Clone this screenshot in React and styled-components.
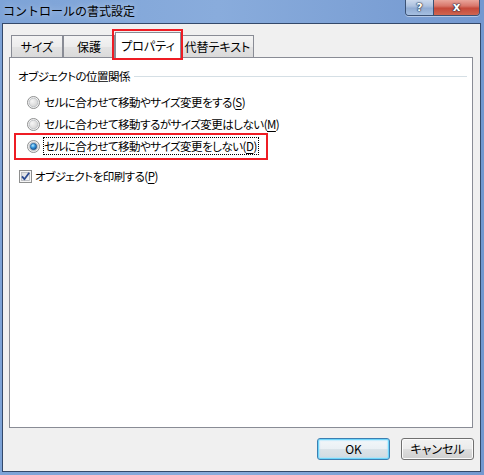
import React from 'react';
import styled, { createGlobalStyle, css } from 'styled-components';

const GlobalStyle = createGlobalStyle`
  html, body { margin: 0; padding: 0; }
  body {
    font-family: "Noto Sans CJK JP", "Noto Sans", sans-serif;
    background: #ffffff;
  }
`;

const Window = styled.div`
  box-sizing: border-box;
  width: 484px;
  height: 475px;
  padding: 0 3px 3px 2px;
  display: flex;
  flex-direction: column;
  overflow: hidden;
  background: linear-gradient(to right, #7da3d7 0%, #89acdc 45%, #7398d0 100%);
`;

const TitleBar = styled.div`
  flex: none;
  height: 23px;
  display: flex;
  align-items: flex-start;
  justify-content: space-between;
`;

const Title = styled.div`
  padding: 3px 0 0 1px;
  font-size: 12px;
  line-height: 16px;
  color: #000;
  text-shadow: 0 0 6px rgba(255, 255, 255, 0.6);
`;

const CaptionButtons = styled.div`
  display: flex;
  height: 16px;
  margin-right: 1px;
  box-sizing: border-box;
  border: 1px solid #3b5275;
  border-top: none;
  border-radius: 0 0 4px 4px;
  overflow: hidden;
  box-shadow: 0 1px 0 rgba(255, 255, 255, 0.45);
`;

const CaptionButton = styled.div`
  box-sizing: border-box;
  width: ${(p) => p.$w}px;
  display: flex;
  align-items: center;
  justify-content: center;
  font-family: "DejaVu Sans", sans-serif;
  font-weight: bold;
  font-size: ${(p) => (p.$close ? 12 : 11)}px;
  line-height: 1;
  color: #fff;
  padding-bottom: 1px;
  text-shadow: 0 0 1px #1c2a40, 0 0 1px #1c2a40, 0 0 2px #1c2a40;
  background: ${(p) =>
    p.$close
      ? 'linear-gradient(#e9a59b 0%, #d8766a 40%, #c5493a 55%, #cf6550 100%)'
      : 'linear-gradient(#cbd9ed 0%, #aec2df 40%, #91acd3 55%, #a5bfe1 100%)'};
  & + & {
    border-left: 1px solid #3b5275;
  }
`;

const Client = styled.div`
  flex: 1;
  box-sizing: border-box;
  border: 1px solid #34496a;
  background: #f0f0f0;
  padding: 8px 7px 11px 6px;
  display: flex;
  flex-direction: column;
`;

const TabStrip = styled.div`
  flex: none;
  height: 25px;
  display: flex;
  align-items: flex-end;
  padding-left: 2px;
  position: relative;
  z-index: 1;
`;

const Tab = styled.div`
  box-sizing: border-box;
  width: ${(p) => p.$w}px;
  height: 22px;
  display: flex;
  align-items: center;
  justify-content: center;
  border: 1px solid #898c95;
  border-bottom: none;
  background: linear-gradient(#f4f4f4 0%, #ececec 50%, #e3e3e3 51%, #dadada 100%);
  font-size: 12px;
  line-height: 16px;
  font-feature-settings: "palt";
  color: #000;
  ${(p) =>
    p.$active &&
    css`
      height: 26px;
      margin-bottom: -1px;
      padding-top: 1px;
      background: #fff;
      position: relative;
      &::after {
        content: '';
        position: absolute;
        left: -4px;
        right: -3px;
        top: -4px;
        bottom: -2px;
        border: 2px solid #ee1c24;
        pointer-events: none;
      }
    `}
`;

const Panel = styled.div`
  flex: 1;
  box-sizing: border-box;
  border: 1px solid #898c95;
  background: #fff;
  padding: 10px 5px 0 8px;
  display: flex;
  flex-direction: column;
  font-size: 11.5px;
  letter-spacing: -0.5px;
  line-height: 16px;
  font-feature-settings: "palt";
  color: #000;
`;

const GroupHeader = styled.div`
  display: flex;
  align-items: center;
  gap: 4px;
  &::after {
    content: '';
    flex: 1;
    height: 1px;
    background: #d5dfe5;
  }
`;

const OptionList = styled.div`
  display: flex;
  flex-direction: column;
  align-items: flex-start;
  gap: 4px;
  margin: 9px 0 0 9px;
`;

const OptionRow = styled.label`
  display: flex;
  align-items: center;
  gap: ${(p) => (p.$check ? 2 : 3)}px;
  position: relative;
  ${(p) =>
    p.$highlight &&
    css`
      &::after {
        content: '';
        position: absolute;
        left: -13px;
        right: -9px;
        top: -4px;
        bottom: -5px;
        border: 2px solid #ee1c24;
        pointer-events: none;
      }
    `}
`;

const CheckRow = styled(OptionRow)`
  align-self: flex-start;
  margin: 12px 0 0 1px;
`;

const OptionText = styled.span`
  box-sizing: border-box;
  padding: 0 1px 0 0;
  border: 1px dotted ${(p) => (p.$focus ? '#000' : 'transparent')};
  white-space: nowrap;
`;

const Key = styled.span`
  text-decoration: underline;
  text-underline-offset: 2px;
`;

const ButtonBar = styled.div`
  flex: none;
  margin: 10px -1px 0 0;
  display: flex;
  justify-content: flex-end;
  gap: 11px;
`;

const Button = styled.button`
  box-sizing: border-box;
  width: 73px;
  height: 22px;
  padding: 0;
  border: 1px solid ${(p) => (p.$default ? '#3c7fb1' : '#707070')};
  border-radius: 3px;
  background: ${(p) =>
    p.$default
      ? 'linear-gradient(#f2f7fa 0%, #eaf0f4 50%, #dbe3e8 51%, #d1dbe1 100%)'
      : 'linear-gradient(#f2f2f2 0%, #ebebeb 50%, #dddddd 51%, #cfcfcf 100%)'};
  box-shadow: ${(p) =>
    p.$default ? 'inset 0 0 0 1px #6fd6fb, inset 0 0 1px 2px rgba(160,230,255,0.5)' : 'inset 0 0 0 1px #fbfbfb'};
  font-family: "Noto Sans CJK JP", "Noto Sans", sans-serif;
  font-size: 12px;
  line-height: 16px;
  font-feature-settings: "palt";
  color: #000;
`;

const RadioIcon = ({ checked }) => (
  <svg width="13" height="13" viewBox="0 0 13 13" style={{ flex: 'none' }}>
    <defs>
      <radialGradient id="rin" cx="0.35" cy="0.35" r="0.8">
        <stop offset="0" stopColor="#f6f6f6" />
        <stop offset="1" stopColor="#cfcfcf" />
      </radialGradient>
      <radialGradient id="rdot" cx="0.4" cy="0.35" r="0.7">
        <stop offset="0" stopColor="#b8ebff" />
        <stop offset="0.45" stopColor="#3a9be0" />
        <stop offset="1" stopColor="#0e4b8c" />
      </radialGradient>
    </defs>
    <circle cx="6.5" cy="6.5" r="6" fill="#f4f4f4" stroke="#8e8f8f" />
    <circle cx="6.5" cy="6.5" r="4.3" fill="url(#rin)" stroke="#b9bcc0" strokeWidth="0.8" />
    {checked && <circle cx="6.5" cy="6.5" r="3.2" fill="url(#rdot)" stroke="#1b4f86" strokeWidth="0.6" />}
  </svg>
);

const CheckIcon = () => (
  <svg width="13" height="13" viewBox="0 0 13 13" style={{ flex: 'none' }}>
    <defs>
      <linearGradient id="cin" x1="0" y1="0" x2="1" y2="1">
        <stop offset="0" stopColor="#d9dbde" />
        <stop offset="1" stopColor="#f7f7f7" />
      </linearGradient>
    </defs>
    <rect x="0.5" y="0.5" width="12" height="12" fill="#f6f6f6" stroke="#8e8f8f" />
    <rect x="2.5" y="2.5" width="8" height="8" fill="url(#cin)" stroke="#b2b5ba" strokeWidth="0.8" />
    <path d="M3 6.4 L5.4 9.2 L10.2 2.8" fill="none" stroke="#2b4a91" strokeWidth="1.8" strokeLinejoin="round" />
  </svg>
);

const options = [
  { text: 'セルに合わせて移動やサイズ変更をする', key: 'S' },
  { text: 'セルに合わせて移動するがサイズ変更はしない', key: 'M' },
  { text: 'セルに合わせて移動やサイズ変更をしない', key: 'D', checked: true },
];

const tabs = [
  { label: 'サイズ', w: 52 },
  { label: '保護', w: 52 },
  { label: 'プロパティ', w: 66, active: true },
  { label: '代替テキスト', w: 73 },
];

export default function App() {
  return (
    <>
      <GlobalStyle />
      <Window>
        <TitleBar>
          <Title>コントロールの書式設定</Title>
          <CaptionButtons>
            <CaptionButton $w={27}>?</CaptionButton>
            <CaptionButton $w={46} $close>x</CaptionButton>
          </CaptionButtons>
        </TitleBar>
        <Client>
          <TabStrip>
            {tabs.map((t) => (
              <Tab key={t.label} $w={t.w} $active={t.active}>
                {t.label}
              </Tab>
            ))}
          </TabStrip>
          <Panel>
            <GroupHeader>オブジェクトの位置関係</GroupHeader>
            <OptionList>
              {options.map((o) => (
                <OptionRow key={o.key} $highlight={o.checked}>
                  <RadioIcon checked={o.checked} />
                  <OptionText $focus={o.checked}>
                    {o.text}(<Key>{o.key}</Key>)
                  </OptionText>
                </OptionRow>
              ))}
            </OptionList>
            <CheckRow $check>
              <CheckIcon />
              <OptionText>
                オブジェクトを印刷する(<Key>P</Key>)
              </OptionText>
            </CheckRow>
          </Panel>
          <ButtonBar>
            <Button $default>OK</Button>
            <Button>キャンセル</Button>
          </ButtonBar>
        </Client>
      </Window>
    </>
  );
}
